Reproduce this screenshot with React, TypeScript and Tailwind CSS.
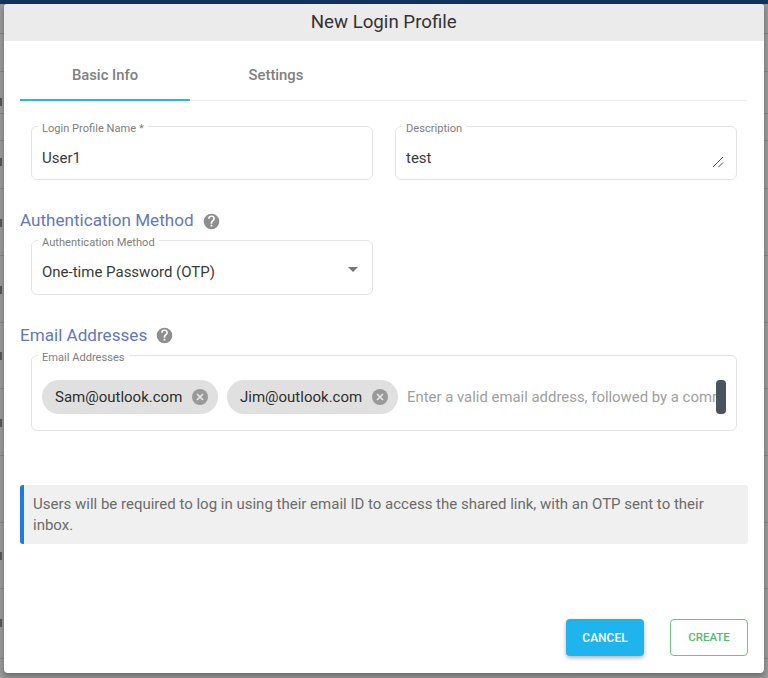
import type { ReactNode } from "react";

const font = { fontFamily: "Roboto, sans-serif" };

// table rows of the page behind the overlay, only their edges show
const backdropRows = [30, 38, 42, 27, 48, 67, 67, 66, 67, 67, 66, 70];
const backdropMarks = [98, 158, 219, 286, 352, 419, 552, 619];

function Field({ label, className, children }: { label: string; className: string; children: ReactNode }) {
  return (
    <fieldset className={`min-w-0 rounded-[6px] border border-[#e4e4e4] pl-[6.5px] pr-[10px] ${className}`}>
      <legend className="relative top-[3px] px-[4px] text-[11.1px] leading-[12px] text-[#808080]">{label}</legend>
      {children}
    </fieldset>
  );
}

function HelpIcon() {
  return (
    <svg width="17" height="17" viewBox="0 0 24 24" className="ml-[9px] mt-[2px]" fill="#8e8e8e">
      <path d="M12 1a11 11 0 1 0 0 22 11 11 0 0 0 0-22zm1.2 18h-2.4v-2.4h2.4V19zm2.5-8.5-1.1 1.1c-.9.9-1.4 1.6-1.4 3.4h-2.4v-.6c0-1.3.5-2.5 1.4-3.4l1.5-1.5c.4-.4.7-1 .7-1.7 0-1.3-1.1-2.4-2.4-2.4S9.6 6.9 9.6 8.2H7.2a4.8 4.8 0 0 1 9.6 0c0 .9-.4 1.7-1.1 2.3z" />
    </svg>
  );
}

function Chip({ text, width }: { text: string; width: string }) {
  return (
    <div className={`flex h-[34px] shrink-0 items-center justify-between rounded-full bg-[#e0e0e0] pl-[13px] pr-[10px] text-[15px] text-[#2e2e2e] ${width}`}>
      <span>{text}</span>
      <svg width="16" height="16" viewBox="0 0 16 16">
        <circle cx="8" cy="8" r="8" fill="#999" />
        <path d="M5 5l6 6M11 5l-6 6" stroke="#e6e6e6" strokeWidth="1.7" />
      </svg>
    </div>
  );
}

export default function App() {
  return (
    <div style={font} className="relative h-[678px] w-[768px] overflow-hidden bg-[#989898]">
      <div className="absolute inset-0">
        <div className="h-[4px] bg-[#14315f]" />
        {backdropRows.map((h, i) => (
          <div key={i} style={{ height: h }} className="border-b border-[#858585]" />
        ))}
        {backdropMarks.map((y) => (
          <div key={y} style={{ top: y }} className="absolute left-0 h-[8px] w-[2px] bg-[#555]" />
        ))}
      </div>

      <div className="relative ml-[3.5px] flex h-[673px] w-[760.5px] flex-col pt-[4px]">
        <div className="flex h-[669px] flex-col rounded-[4px] bg-white shadow-[0_3px_5px_rgba(0,0,0,0.3)]">
          <div className="flex h-[37px] shrink-0 items-center justify-center rounded-t-[4px] bg-[#ebebeb] text-[18.7px] text-[#333]">
            New Login Profile
          </div>

          <div className="ml-[16.5px] mt-[21px] flex h-[39px] w-[727px] shrink-0 border-b border-[#ececec] text-[14.8px] font-medium text-[#808080]">
            <div className="-mb-[1px] flex h-[39px] w-[170px] items-start justify-center border-b-[2px] border-[#29b6ee] pt-[2px]">Basic Info</div>
            <div className="flex w-[172px] items-start justify-center pt-[2px]">Settings</div>
          </div>

          <div className="ml-[27px] mt-[19px] flex w-[706px] gap-[22px]">
            <Field label="Login Profile Name *" className="h-[60px] w-[342px]">
              <div className="pl-[4px] pt-[15px] text-[15px] text-[#3a3a3a]">User1</div>
            </Field>
            <Field label="Description" className="h-[60px] w-[342px]">
              <div className="flex items-start justify-between pl-[4px] pt-[15px] text-[15px] text-[#3a3a3a]">
                <span>test</span>
                <svg width="12" height="12" viewBox="0 0 12 12" className="mr-[2px] mt-[9px]" stroke="#555" strokeWidth="1">
                  <path d="M1 11 11 1M6.5 11 11 6.5" />
                </svg>
              </div>
            </Field>
          </div>

          <div className="ml-[16.5px] mt-[30px] flex items-center text-[17.1px] leading-[20px] text-[#6578b8]">
            <span>Authentication Method</span>
            <HelpIcon />
          </div>

          <Field label="Authentication Method" className="ml-[27px] mt-[4px] h-[61px] w-[342px]">
            <div className="flex items-center justify-between pl-[4px] pt-[15px] text-[15px] text-[#3a3a3a]">
              <span>One-time Password (OTP)</span>
              <span className="-mt-[6px] mr-[4px] h-0 w-0 border-x-[5px] border-t-[5px] border-x-transparent border-t-[#777]" />
            </div>
          </Field>

          <div className="ml-[16.5px] mt-[29.5px] flex items-center text-[17.1px] leading-[20px] text-[#6578b8]">
            <span>Email Addresses</span>
            <HelpIcon />
          </div>

          <Field label="Email Addresses" className="ml-[27px] mt-[4.5px] h-[82px] w-[706px]">
            <div className="relative mt-[19px] flex items-center gap-[9px] overflow-hidden pl-[4px]">
              <Chip text="Sam@outlook.com" width="w-[176px]" />
              <Chip text="Jim@outlook.com" width="w-[171px]" />
              <span className="whitespace-nowrap text-[14.9px] text-[#a0a0a0]">Enter a valid email address, followed by a comma</span>
              <div className="absolute right-0 top-0 h-[34px] w-[10px] rounded-[4px] bg-[#4a545d]" />
            </div>
          </Field>

          <div className="ml-[16.5px] mt-[54px] h-[59px] w-[728px] rounded-[3px] border-l-[4px] border-[#1e7bdc] bg-[#f0f0f0] pl-[9px] pr-[8px] pt-[9px] text-[15px] leading-[21px] text-[#6b6b6b]">
            Users will be required to log in using their email ID to access the shared link, with an OTP sent to their inbox.
          </div>

          <div className="mr-[16px] mt-[75px] flex justify-end gap-[26px] text-[12px] font-medium">
            <button className="h-[37px] w-[78px] rounded-[4px] bg-[#1fb4ed] text-white shadow-[0_2px_4px_rgba(0,0,0,0.3)]">CANCEL</button>
            <button className="h-[37px] w-[78px] rounded-[4px] border border-[#6cc583] bg-white text-[11.5px] text-[#55bb70]">CREATE</button>
          </div>
        </div>
      </div>
    </div>
  );
}
